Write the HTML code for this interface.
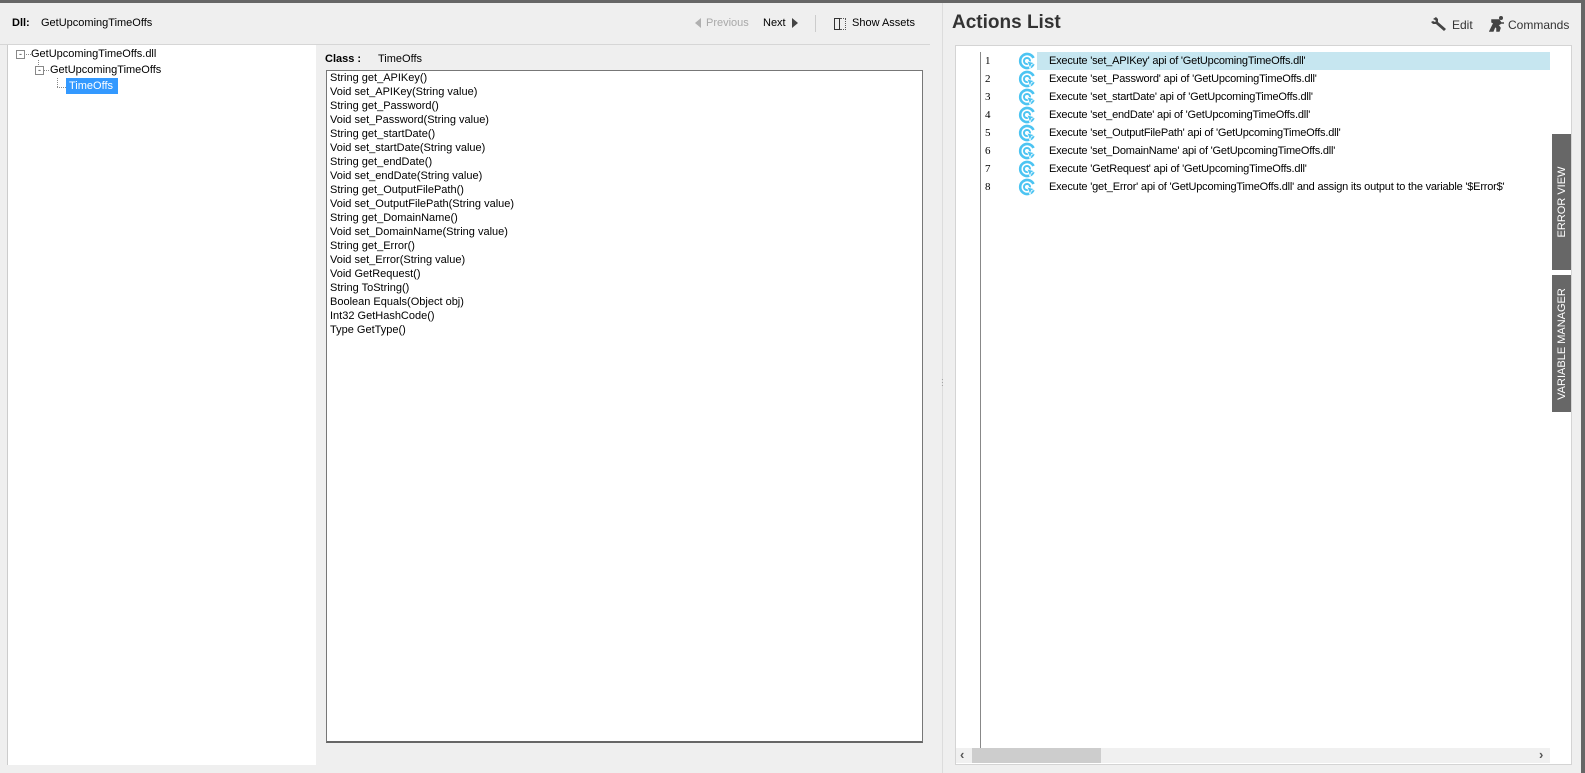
<!DOCTYPE html>
<html><head><meta charset="utf-8"><style>
*{margin:0;padding:0;box-sizing:border-box}
body{width:1585px;height:773px;background:#efefef;font-family:"Liberation Sans",Tahoma,sans-serif;font-size:11px;color:#000;position:relative;overflow:hidden}
.a{position:absolute}
.code div{height:14px;line-height:14px;white-space:nowrap}
.row{position:absolute;left:0;height:18px;line-height:18px;white-space:nowrap;font-size:11px;letter-spacing:-0.2px}
.num{position:absolute;left:30px;font-family:"Liberation Serif",serif;font-size:11px}
.ic{position:absolute;left:63px;top:0px}
.tx{position:absolute;left:94px}
.tab{position:absolute;left:1552px;width:19px;background:#676767;color:#fff;font-size:11px}
.tab span{position:absolute;left:50%;top:50%;transform:translate(-50%,-50%) rotate(-90deg);white-space:nowrap}
</style></head><body>
<svg width="0" height="0" style="position:absolute"><defs><symbol id="g" viewBox="0 0 18 18"><path d="M15.5 6 A7 7 0 1 0 15.5 12" fill="none" stroke="#4cc4f2" stroke-width="2.6"/><circle cx="9" cy="9" r="3" fill="none" stroke="#4cc4f2" stroke-width="2"/><path d="M9 9 L17 11 L13.5 12.5 L12 16.5Z" fill="#4cc4f2" stroke="#fff" stroke-width="0.8"/></symbol></defs></svg>
<div class="a" style="left:0;top:0;width:1585px;height:3px;background:#666"></div>
<div class="a" style="left:1581px;top:0;width:4px;height:773px;background:#666"></div>
<div class="a" style="left:12px;top:17px;font-weight:bold">Dll:</div>
<div class="a" style="left:41px;top:17px">GetUpcomingTimeOffs</div>
<div class="a" style="left:695px;top:18px;width:0;height:0;border-top:5px solid transparent;border-bottom:5px solid transparent;border-right:6px solid #b0b0b0"></div>
<div class="a" style="left:706px;top:17px;color:#a8a8a8">Previous</div>
<div class="a" style="left:763px;top:17px">Next</div>
<div class="a" style="left:792px;top:18px;width:0;height:0;border-top:5px solid transparent;border-bottom:5px solid transparent;border-left:6px solid #444"></div>
<div class="a" style="left:815px;top:15px;width:1px;height:17px;background:#ccc"></div>
<div class="a" style="left:834px;top:18px;width:6px;height:12px;border:1px solid #333"></div>
<div class="a" style="left:840px;top:18px;width:6px;height:12px;border:1px dotted #555;border-left:none"></div>
<div class="a" style="left:852px;top:17px">Show Assets</div>
<div class="a" style="left:0;top:44px;width:930px;height:1px;background:#d6d6d6"></div>
<div class="a" style="left:7px;top:45px;width:309px;height:720px;background:#fff;border-left:1px solid #ccc"></div>
<div class="a" style="left:16px;top:50px;width:9px;height:9px;border:1px solid #888;font-size:9px;line-height:6px;text-align:center;color:#333">-</div>
<div class="a" style="left:26px;top:54px;width:5px;border-top:1px dotted #888"></div>
<div class="a" style="left:31px;top:48px">GetUpcomingTimeOffs.dll</div>
<div class="a" style="left:38px;top:60px;height:5px;border-left:1px dotted #888"></div>
<div class="a" style="left:35px;top:66px;width:9px;height:9px;border:1px solid #888;font-size:9px;line-height:6px;text-align:center;color:#333">-</div>
<div class="a" style="left:44px;top:70px;width:5px;border-top:1px dotted #888"></div>
<div class="a" style="left:50px;top:64px">GetUpcomingTimeOffs</div>
<div class="a" style="left:57px;top:78px;height:9px;border-left:1px dotted #888"></div>
<div class="a" style="left:57px;top:87px;width:9px;border-top:1px dotted #888"></div>
<div class="a" style="left:66px;top:78px;width:52px;height:16px;background:#3399ff;color:#fff;line-height:16px;padding-left:3px">TimeOffs</div>
<div class="a" style="left:325px;top:53px;font-weight:bold">Class :</div>
<div class="a" style="left:378px;top:53px">TimeOffs</div>
<div class="a code" style="left:326px;top:70px;width:597px;height:673px;background:#fff;border:1px solid #777;border-bottom:2px solid #666;padding:0 0 0 3px">
<div>String get_APIKey()</div><div>Void set_APIKey(String value)</div><div>String get_Password()</div><div>Void set_Password(String value)</div><div>String get_startDate()</div><div>Void set_startDate(String value)</div><div>String get_endDate()</div><div>Void set_endDate(String value)</div><div>String get_OutputFilePath()</div><div>Void set_OutputFilePath(String value)</div><div>String get_DomainName()</div><div>Void set_DomainName(String value)</div><div>String get_Error()</div><div>Void set_Error(String value)</div><div>Void GetRequest()</div><div>String ToString()</div><div>Boolean Equals(Object obj)</div><div>Int32 GetHashCode()</div><div>Type GetType()</div>
</div>
<div class="a" style="left:942px;top:3px;width:1px;height:770px;background:#dcdcdc"></div>
<div class="a" style="left:941px;top:378px;color:#888;font-size:8px;line-height:3px">·<br>·<br>·</div>
<div class="a" style="left:952px;top:12px;font-size:19px;font-weight:bold;color:#333">Actions List</div>
<svg class="a" style="left:1431px;top:16px" width="16" height="16" viewBox="0 0 16 16"><path d="M2 3 L5 1 L7 3 L7 6 L15 13 L13 15 L5 8 L2 8 L0 6 L2 5 L4 6 L5 5 L4 4Z" fill="#444"/></svg>
<div class="a" style="left:1452px;top:18px;font-size:12px;color:#333">Edit</div>
<svg class="a" style="left:1489px;top:15px" width="17" height="17" viewBox="0 0 17 17"><circle cx="12" cy="3" r="2" fill="#444"/><path d="M3 5 L10 5 L12 8 L9 10 L11 13 L10 16 L8 16 L8 13 L6 11 L4 16 L1 16 L5 8 L3 7Z M12 8 L15 8" stroke="#444" stroke-width="1.5" fill="#444"/></svg>
<div class="a" style="left:1508px;top:18px;font-size:12px;color:#333">Commands</div>
<div class="a" style="left:955px;top:45px;width:617px;height:720px;background:#fff;border:1px solid #d4d4d4"></div>
<div class="a" style="left:980px;top:52px;width:1px;height:696px;background:#888"></div>
<div class="a" style="left:1037px;top:52px;width:513px;height:18px;background:#c6e6f0"></div>
<div class="a" style="left:955px;top:52px;width:600px">
<div class="row" style="top:0"><span class="num">1</span><svg class="ic" width="18" height="18"><use href="#g"/></svg><span class="tx">Execute 'set_APIKey' api of 'GetUpcomingTimeOffs.dll'</span></div>
<div class="row" style="top:18px"><span class="num">2</span><svg class="ic" width="18" height="18"><use href="#g"/></svg><span class="tx">Execute 'set_Password' api of 'GetUpcomingTimeOffs.dll'</span></div>
<div class="row" style="top:36px"><span class="num">3</span><svg class="ic" width="18" height="18"><use href="#g"/></svg><span class="tx">Execute 'set_startDate' api of 'GetUpcomingTimeOffs.dll'</span></div>
<div class="row" style="top:54px"><span class="num">4</span><svg class="ic" width="18" height="18"><use href="#g"/></svg><span class="tx">Execute 'set_endDate' api of 'GetUpcomingTimeOffs.dll'</span></div>
<div class="row" style="top:72px"><span class="num">5</span><svg class="ic" width="18" height="18"><use href="#g"/></svg><span class="tx">Execute 'set_OutputFilePath' api of 'GetUpcomingTimeOffs.dll'</span></div>
<div class="row" style="top:90px"><span class="num">6</span><svg class="ic" width="18" height="18"><use href="#g"/></svg><span class="tx">Execute 'set_DomainName' api of 'GetUpcomingTimeOffs.dll'</span></div>
<div class="row" style="top:108px"><span class="num">7</span><svg class="ic" width="18" height="18"><use href="#g"/></svg><span class="tx">Execute 'GetRequest' api of 'GetUpcomingTimeOffs.dll'</span></div>
<div class="row" style="top:126px"><span class="num">8</span><svg class="ic" width="18" height="18"><use href="#g"/></svg><span class="tx">Execute 'get_Error' api of 'GetUpcomingTimeOffs.dll' and assign its output to the variable '$Error$'</span></div>
</div>
<div class="a" style="left:956px;top:748px;width:594px;height:15px;background:#f0f0f0"></div>
<div class="a" style="left:972px;top:748px;width:129px;height:15px;background:#cdcdcd"></div>
<div class="a" style="left:960px;top:747px;font-size:13px;font-weight:bold;color:#555">‹</div>
<div class="a" style="left:1539px;top:747px;font-size:13px;font-weight:bold;color:#555">›</div>
<div class="tab" style="top:134px;height:136px"><span>ERROR VIEW</span></div>
<div class="tab" style="top:275px;height:137px"><span>VARIABLE MANAGER</span></div>
</body></html>
